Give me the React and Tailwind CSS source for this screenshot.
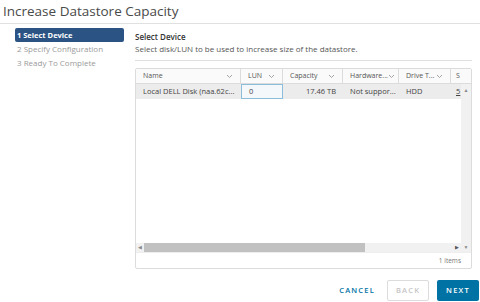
import React from 'react';

const font = { fontFamily: '"Open Sans", "Noto Sans", sans-serif' };

const Chevron = () => (
  <svg width="7" height="5" viewBox="0 0 7 5" className="shrink-0">
    <path d="M1 1l2.5 2.5L6 1" fill="none" stroke="#9a9a9a" strokeWidth="0.9" />
  </svg>
);

const columns = [
  { label: 'Name', w: 'w-[105px]' },
  { label: 'LUN', w: 'w-[42px]' },
  { label: 'Capacity', w: 'w-[60px]' },
  { label: 'Hardware...', w: 'w-[56px]' },
  { label: 'Drive T...', w: 'w-[52px]' },
];

const cell = 'shrink-0 flex items-center px-[7px] whitespace-nowrap overflow-hidden';

export default function App() {
  return (
    <div className="w-[480px] h-[302px] bg-white text-[#565656] overflow-hidden flex flex-col" style={font}>
      {/* Title */}
      <div className="pl-[3px] pt-[3px] h-[24px] border-b border-[#e0e0e0] text-[13.5px] leading-[17px] text-[#4a4a4a]">
        Increase Datastore Capacity
      </div>

      <div className="flex">
        {/* Steps */}
        <div className="w-[135px] shrink-0 pl-[15px] pt-[4px] flex flex-col">
          <div className="w-[109px] h-[14px] bg-[#2b5383] rounded-[2px] text-white text-[7.5px] font-bold leading-[14px] pl-[2px]">
            1 Select Device
          </div>
          <div className="text-[8px] leading-[14px] text-[#9a9a9a] pl-[2px]">2 Specify Configuration</div>
          <div className="text-[8px] leading-[14px] text-[#9a9a9a] pl-[2px]">3 Ready To Complete</div>
        </div>

        {/* Content */}
        <div className="flex-1 pr-[8px] flex flex-col">
          <div className="pt-[7px] text-[8px] font-semibold text-[#333] leading-[12px]">Select Device</div>
          <div className="text-[8px] leading-[12px] text-[#565656] pb-[5px] border-b border-[#e0e0e0]">
            Select disk/LUN to be used to increase size of the datastore.
          </div>

          {/* Table */}
          <div className="mt-[7px] h-[201px] border border-[#dcdcdc] rounded-[2px] flex flex-col text-[7px] text-[#565656]">
            <div className="flex h-[15px] border-b border-[#dcdcdc] bg-[#fafafa]">
              {columns.map((c) => (
                <div key={c.label} className={`${c.w} ${cell} justify-between border-r border-[#dcdcdc]`}>
                  <span>{c.label}</span>
                  <Chevron />
                </div>
              ))}
              <div className="flex items-center pl-[5px]">S</div>
            </div>

            <div className="flex flex-1 min-h-0">
              <div className="flex-1 flex flex-col min-w-0">
                <div className="flex h-[15px] bg-[#ececec] text-[#444] text-[7.5px]">
                  <div className={`w-[105px] ${cell}`}>Local DELL Disk (naa.62c...</div>
                  <div className={`w-[42px] ${cell} border border-[#8dbdd8] bg-[#f4f8fa]`}>0</div>
                  <div className={`w-[60px] ${cell} justify-end`}>17.46 TB</div>
                  <div className={`w-[56px] ${cell}`}>Not suppor...</div>
                  <div className={`w-[52px] ${cell}`}>HDD</div>
                  <div className="flex items-center pl-[5px] underline">5</div>
                </div>
                <div className="flex-1" />
              </div>
              {/* vertical scrollbar */}
              <div className="w-[10px] bg-[#f1f1f1] flex flex-col items-center">
                <span className="text-[5px] leading-[12px] text-[#888]">▲</span>
              </div>
            </div>

            {/* horizontal scrollbar */}
            <div className="h-[9px] flex items-center bg-[#f1f1f1]">
              <span className="w-[8px] text-[5px] text-center text-[#888]">◀</span>
              <div className="w-[221px] h-[9px] bg-[#c1c1c1]" />
              <div className="flex-1" />
              <span className="w-[8px] text-[5px] text-center text-[#555]">▶</span>
              <span className="w-[10px] text-[5px] text-center text-[#888]">▼</span>
            </div>

            <div className="h-[16px] flex items-center justify-end pr-[10px] text-[6.5px] text-[#777] border-t border-[#eeeeee]">
              1 items
            </div>
          </div>
        </div>
      </div>

      {/* Buttons */}
      <div className="flex items-center justify-end gap-[8px] mt-[11px] pr-[1px]">
        <button className="h-[21px] px-[4px] text-[7.5px] font-semibold tracking-[1.2px] text-[#0072a3]">CANCEL</button>
        <button className="w-[42px] h-[21px] border border-[#dcdcdc] rounded-[2px] text-[7.5px] font-semibold tracking-[1.2px] text-[#c5c5c5]">BACK</button>
        <button className="w-[42px] h-[21px] bg-[#0072a3] rounded-[2px] text-[7.5px] font-semibold tracking-[1.2px] text-white">NEXT</button>
      </div>
    </div>
  );
}
